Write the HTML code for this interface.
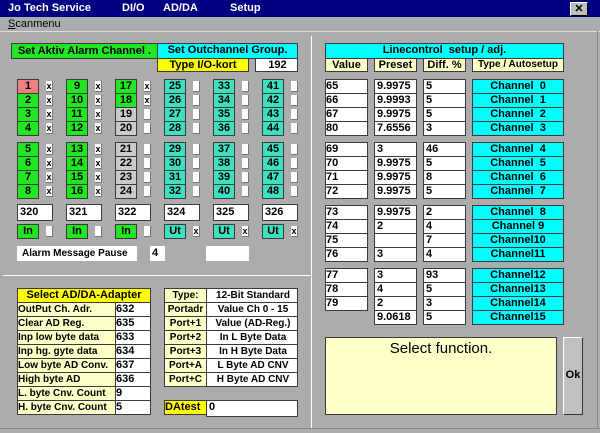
<!DOCTYPE html>
<html><head><style>
*{margin:0;padding:0;box-sizing:border-box}
body{width:600px;height:433px;background:#acacac;font:bold 11px "Liberation Sans",sans-serif;color:#000;position:relative;overflow:hidden}
div{position:absolute;white-space:nowrap;overflow:hidden}
.tb{left:0;top:0;width:600px;height:17px;background:#000080;color:#fff;font-size:11px}
.tb span{position:absolute;top:2px}
.x{left:570px;top:2px;width:18px;height:14px;background:#c0c0c0;border:1px solid;border-color:#fff #000 #000 #fff;color:#000;text-align:center;font-size:11px;line-height:12px}
.c{width:22px;height:15px;border:1px solid #3a3a3a;text-align:center;line-height:13px;font-size:11px}
.g{background:#22e622}.t{background:#3ee0c0}.y{background:#cacaca}.r{background:#f08080}
.k{width:7px;height:11px;background:#fff;border-right:1px solid #777;border-bottom:1px solid #777;font-size:9px;line-height:10px;text-align:center}
.w{background:#fff;border:1px solid #3a3a3a;height:15px;line-height:13px;padding-left:2px}
.ly{background:#ffffc8;border:1px solid #3a3a3a;height:15px;line-height:13px;font-size:10px}
.cy{background:#00ffff;border:1px solid #3a3a3a;height:15px;line-height:13px;text-align:center}
.ce{text-align:center}
.hl{background:#fff;height:1px}
.vl{background:#fff;width:1px}
.s{font-size:10px}
</style></head><body>
<div class="tb"><span style="left:8px">Jo Tech Service</span><span style="left:122px">DI/O</span><span style="left:163px">AD/DA</span><span style="left:230px">Setup</span></div>
<div class="x">✕</div>
<div style="left:8px;top:18px;font-weight:normal"><u>S</u>canmenu</div>
<div class="hl" style="left:0;top:31px;width:600px;background:#ddd"></div>
<div class="vl" style="left:311px;top:36px;height:392px"></div>
<div class="hl" style="left:3px;top:275px;width:308px"></div>
<div class="hl" style="left:0;top:428px;width:600px;background:#888"></div>
<div class="vl" style="left:597px;top:31px;height:398px;background:#888"></div>

<div style="left:11px;top:43px;width:147px;height:16px;background:#22e622;border:1px solid #3a3a3a;text-align:center;line-height:14px">Set Aktiv Alarm Channel .</div>
<div class="cy" style="left:157px;top:43px;width:141px;height:16px">Set Outchannel Group.</div>
<div style="left:157px;top:58px;width:92px;height:14px;background:#ffff00;border:1px solid #3a3a3a;text-align:center;line-height:12px">Type I/O-kort</div>
<div class="w ce" style="left:255px;top:58px;width:43px;height:14px;line-height:12px">192</div>

<div class="c r" style="left:17px;top:79px">1</div><div class="c g" style="left:17px;top:93px">2</div><div class="c g" style="left:17px;top:107px">3</div><div class="c g" style="left:17px;top:121px">4</div>
<div class="c g" style="left:17px;top:142px">5</div><div class="c g" style="left:17px;top:156px">6</div><div class="c g" style="left:17px;top:170px">7</div><div class="c g" style="left:17px;top:184px">8</div>
<div class="c g" style="left:66px;top:79px">9</div><div class="c g" style="left:66px;top:93px">10</div><div class="c g" style="left:66px;top:107px">11</div><div class="c g" style="left:66px;top:121px">12</div>
<div class="c g" style="left:66px;top:142px">13</div><div class="c g" style="left:66px;top:156px">14</div><div class="c g" style="left:66px;top:170px">15</div><div class="c g" style="left:66px;top:184px">16</div>
<div class="c g" style="left:115px;top:79px">17</div><div class="c g" style="left:115px;top:93px">18</div><div class="c y" style="left:115px;top:107px">19</div><div class="c y" style="left:115px;top:121px">20</div>
<div class="c y" style="left:115px;top:142px">21</div><div class="c y" style="left:115px;top:156px">22</div><div class="c y" style="left:115px;top:170px">23</div><div class="c y" style="left:115px;top:184px">24</div>
<div class="c t" style="left:164px;top:79px">25</div><div class="c t" style="left:164px;top:93px">26</div><div class="c t" style="left:164px;top:107px">27</div><div class="c t" style="left:164px;top:121px">28</div>
<div class="c t" style="left:164px;top:142px">29</div><div class="c t" style="left:164px;top:156px">30</div><div class="c t" style="left:164px;top:170px">31</div><div class="c t" style="left:164px;top:184px">32</div>
<div class="c t" style="left:213px;top:79px">33</div><div class="c t" style="left:213px;top:93px">34</div><div class="c t" style="left:213px;top:107px">35</div><div class="c t" style="left:213px;top:121px">36</div>
<div class="c t" style="left:213px;top:142px">37</div><div class="c t" style="left:213px;top:156px">38</div><div class="c t" style="left:213px;top:170px">39</div><div class="c t" style="left:213px;top:184px">40</div>
<div class="c t" style="left:262px;top:79px">41</div><div class="c t" style="left:262px;top:93px">42</div><div class="c t" style="left:262px;top:107px">43</div><div class="c t" style="left:262px;top:121px">44</div>
<div class="c t" style="left:262px;top:142px">45</div><div class="c t" style="left:262px;top:156px">46</div><div class="c t" style="left:262px;top:170px">47</div><div class="c t" style="left:262px;top:184px">48</div>

<div class="k" style="left:46px;top:81px">x</div><div class="k" style="left:46px;top:95px">x</div><div class="k" style="left:46px;top:109px">x</div><div class="k" style="left:46px;top:123px">x</div>
<div class="k" style="left:46px;top:144px">x</div><div class="k" style="left:46px;top:158px">x</div><div class="k" style="left:46px;top:172px">x</div><div class="k" style="left:46px;top:186px">x</div>
<div class="k" style="left:95px;top:81px">x</div><div class="k" style="left:95px;top:95px">x</div><div class="k" style="left:95px;top:109px">x</div><div class="k" style="left:95px;top:123px">x</div>
<div class="k" style="left:95px;top:144px">x</div><div class="k" style="left:95px;top:158px">x</div><div class="k" style="left:95px;top:172px">x</div><div class="k" style="left:95px;top:186px">x</div>
<div class="k" style="left:144px;top:81px">x</div><div class="k" style="left:144px;top:95px">x</div><div class="k" style="left:144px;top:109px"></div><div class="k" style="left:144px;top:123px"></div>
<div class="k" style="left:144px;top:144px"></div><div class="k" style="left:144px;top:158px"></div><div class="k" style="left:144px;top:172px"></div><div class="k" style="left:144px;top:186px"></div>
<div class="k" style="left:193px;top:81px"></div><div class="k" style="left:193px;top:95px"></div><div class="k" style="left:193px;top:109px"></div><div class="k" style="left:193px;top:123px"></div>
<div class="k" style="left:193px;top:144px"></div><div class="k" style="left:193px;top:158px"></div><div class="k" style="left:193px;top:172px"></div><div class="k" style="left:193px;top:186px"></div>
<div class="k" style="left:242px;top:81px"></div><div class="k" style="left:242px;top:95px"></div><div class="k" style="left:242px;top:109px"></div><div class="k" style="left:242px;top:123px"></div>
<div class="k" style="left:242px;top:144px"></div><div class="k" style="left:242px;top:158px"></div><div class="k" style="left:242px;top:172px"></div><div class="k" style="left:242px;top:186px"></div>
<div class="k" style="left:291px;top:81px"></div><div class="k" style="left:291px;top:95px"></div><div class="k" style="left:291px;top:109px"></div><div class="k" style="left:291px;top:123px"></div>
<div class="k" style="left:291px;top:144px"></div><div class="k" style="left:291px;top:158px"></div><div class="k" style="left:291px;top:172px"></div><div class="k" style="left:291px;top:186px"></div>

<div class="w" style="left:17px;top:204px;width:36px;height:17px;line-height:15px">320</div>
<div class="w" style="left:66px;top:204px;width:36px;height:17px;line-height:15px">321</div>
<div class="w" style="left:115px;top:204px;width:36px;height:17px;line-height:15px">322</div>
<div class="w" style="left:164px;top:204px;width:36px;height:17px;line-height:15px">324</div>
<div class="w" style="left:213px;top:204px;width:36px;height:17px;line-height:15px">325</div>
<div class="w" style="left:262px;top:204px;width:36px;height:17px;line-height:15px">326</div>

<div class="c g" style="left:17px;top:224px">In</div><div class="k" style="left:46px;top:226px"></div>
<div class="c g" style="left:66px;top:224px">In</div><div class="k" style="left:95px;top:226px"></div>
<div class="c g" style="left:115px;top:224px">In</div><div class="k" style="left:144px;top:226px"></div>
<div class="c t" style="left:164px;top:224px">Ut</div><div class="k" style="left:193px;top:226px">x</div>
<div class="c t" style="left:213px;top:224px">Ut</div><div class="k" style="left:242px;top:226px">x</div>
<div class="c t" style="left:262px;top:224px">Ut</div><div class="k" style="left:291px;top:226px">x</div>

<div class="s" style="left:17px;top:246px;width:120px;height:15px;background:#fff;line-height:15px;padding-left:5px">Alarm Message Pause</div>
<div style="left:150px;top:246px;width:15px;height:15px;background:#fff;line-height:15px;padding-left:2px">4</div>
<div style="left:206px;top:246px;width:43px;height:15px;background:#fff"></div>

<div style="left:17px;top:288px;width:134px;height:15px;background:#ffff00;border:1px solid #3a3a3a;text-align:center;line-height:13px">Select AD/DA-Adapter</div>
<div class="ly" style="left:17px;top:302px;width:99px">OutPut Ch. Adr.</div><div class="w" style="left:115px;top:302px;width:36px;padding-left:0">632</div>
<div class="ly" style="left:17px;top:316px;width:99px">Clear AD Reg.</div><div class="w" style="left:115px;top:316px;width:36px;padding-left:0">635</div>
<div class="ly" style="left:17px;top:330px;width:99px">Inp low byte data</div><div class="w" style="left:115px;top:330px;width:36px;padding-left:0">633</div>
<div class="ly" style="left:17px;top:344px;width:99px">Inp hg. gyte data</div><div class="w" style="left:115px;top:344px;width:36px;padding-left:0">634</div>
<div class="ly" style="left:17px;top:358px;width:99px">Low byte AD Conv.</div><div class="w" style="left:115px;top:358px;width:36px;padding-left:0">637</div>
<div class="ly" style="left:17px;top:372px;width:99px">High byte AD</div><div class="w" style="left:115px;top:372px;width:36px;padding-left:0">636</div>
<div class="ly" style="left:17px;top:386px;width:99px">L. byte Cnv. Count</div><div class="w" style="left:115px;top:386px;width:36px;padding-left:0">9</div>
<div class="ly" style="left:17px;top:400px;width:99px">H. byte Cnv. Count</div><div class="w" style="left:115px;top:400px;width:36px;padding-left:0">5</div>

<div class="ly ce" style="left:164px;top:288px;width:43px">Type:</div><div class="w ce s" style="left:206px;top:288px;width:92px">12-Bit Standard</div>
<div class="ly ce" style="left:164px;top:302px;width:43px">Portadr</div><div class="w ce s" style="left:206px;top:302px;width:92px">Value Ch 0 - 15</div>
<div class="ly ce" style="left:164px;top:316px;width:43px">Port+1</div><div class="w ce s" style="left:206px;top:316px;width:92px">Value (AD-Reg.)</div>
<div class="ly ce" style="left:164px;top:330px;width:43px">Port+2</div><div class="w ce s" style="left:206px;top:330px;width:92px">In L Byte Data</div>
<div class="ly ce" style="left:164px;top:344px;width:43px">Port+3</div><div class="w ce s" style="left:206px;top:344px;width:92px">In H Byte Data</div>
<div class="ly ce" style="left:164px;top:358px;width:43px">Port+A</div><div class="w ce s" style="left:206px;top:358px;width:92px">L Byte AD CNV</div>
<div class="ly ce" style="left:164px;top:372px;width:43px">Port+C</div><div class="w ce s" style="left:206px;top:372px;width:92px">H Byte AD CNV</div>
<div style="left:164px;top:400px;width:43px;height:15px;background:#ffff00;border:1px solid #3a3a3a;line-height:13px">DAtest</div><div class="w" style="left:206px;top:400px;width:92px;height:17px">0</div>

<div class="cy" style="left:325px;top:43px;width:239px;height:16px">Linecontrol&nbsp; setup / adj.</div>
<div class="ly ce" style="left:325px;top:58px;width:43px;height:14px;line-height:12px;font-size:11px">Value</div>
<div class="ly ce" style="left:374px;top:58px;width:43px;height:14px;line-height:12px;font-size:11px">Preset</div>
<div class="ly ce" style="left:423px;top:58px;width:43px;height:14px;line-height:12px;font-size:11px">Diff. %</div>
<div class="ly ce" style="left:472px;top:58px;width:92px;height:14px;line-height:12px">Type / Autosetup</div>

<div class="w" style="left:325px;top:79px;width:43px;padding-left:0">65</div><div class="w" style="left:374px;top:79px;width:43px">9.9975</div><div class="w" style="left:423px;top:79px;width:43px">5</div><div class="cy" style="left:472px;top:79px;width:92px">Channel&nbsp; 0</div>
<div class="w" style="left:325px;top:93px;width:43px;padding-left:0">66</div><div class="w" style="left:374px;top:93px;width:43px">9.9993</div><div class="w" style="left:423px;top:93px;width:43px">5</div><div class="cy" style="left:472px;top:93px;width:92px">Channel&nbsp; 1</div>
<div class="w" style="left:325px;top:107px;width:43px;padding-left:0">67</div><div class="w" style="left:374px;top:107px;width:43px">9.9975</div><div class="w" style="left:423px;top:107px;width:43px">5</div><div class="cy" style="left:472px;top:107px;width:92px">Channel&nbsp; 2</div>
<div class="w" style="left:325px;top:121px;width:43px;padding-left:0">80</div><div class="w" style="left:374px;top:121px;width:43px">7.6556</div><div class="w" style="left:423px;top:121px;width:43px">3</div><div class="cy" style="left:472px;top:121px;width:92px">Channel&nbsp; 3</div>

<div class="w" style="left:325px;top:142px;width:43px;padding-left:0">69</div><div class="w" style="left:374px;top:142px;width:43px">3</div><div class="w" style="left:423px;top:142px;width:43px">46</div><div class="cy" style="left:472px;top:142px;width:92px">Channel&nbsp; 4</div>
<div class="w" style="left:325px;top:156px;width:43px;padding-left:0">70</div><div class="w" style="left:374px;top:156px;width:43px">9.9975</div><div class="w" style="left:423px;top:156px;width:43px">5</div><div class="cy" style="left:472px;top:156px;width:92px">Channel&nbsp; 5</div>
<div class="w" style="left:325px;top:170px;width:43px;padding-left:0">71</div><div class="w" style="left:374px;top:170px;width:43px">9.9975</div><div class="w" style="left:423px;top:170px;width:43px">8</div><div class="cy" style="left:472px;top:170px;width:92px">Channel&nbsp; 6</div>
<div class="w" style="left:325px;top:184px;width:43px;padding-left:0">72</div><div class="w" style="left:374px;top:184px;width:43px">9.9975</div><div class="w" style="left:423px;top:184px;width:43px">5</div><div class="cy" style="left:472px;top:184px;width:92px">Channel&nbsp; 7</div>

<div class="w" style="left:325px;top:205px;width:43px;padding-left:0">73</div><div class="w" style="left:374px;top:205px;width:43px">9.9975</div><div class="w" style="left:423px;top:205px;width:43px">2</div><div class="cy" style="left:472px;top:205px;width:92px">Channel&nbsp; 8</div>
<div class="w" style="left:325px;top:219px;width:43px;padding-left:0">74</div><div class="w" style="left:374px;top:219px;width:43px">2</div><div class="w" style="left:423px;top:219px;width:43px">4</div><div class="cy" style="left:472px;top:219px;width:92px">Channel 9</div>
<div class="w" style="left:325px;top:233px;width:43px;padding-left:0">75</div><div class="w" style="left:374px;top:233px;width:43px"></div><div class="w" style="left:423px;top:233px;width:43px">7</div><div class="cy" style="left:472px;top:233px;width:92px">Channel10</div>
<div class="w" style="left:325px;top:247px;width:43px;padding-left:0">76</div><div class="w" style="left:374px;top:247px;width:43px">3</div><div class="w" style="left:423px;top:247px;width:43px">4</div><div class="cy" style="left:472px;top:247px;width:92px">Channel11</div>

<div class="w" style="left:325px;top:268px;width:43px;padding-left:0">77</div><div class="w" style="left:374px;top:268px;width:43px">3</div><div class="w" style="left:423px;top:268px;width:43px">93</div><div class="cy" style="left:472px;top:268px;width:92px">Channel12</div>
<div class="w" style="left:325px;top:282px;width:43px;padding-left:0">78</div><div class="w" style="left:374px;top:282px;width:43px">4</div><div class="w" style="left:423px;top:282px;width:43px">5</div><div class="cy" style="left:472px;top:282px;width:92px">Channel13</div>
<div class="w" style="left:325px;top:296px;width:43px;padding-left:0">79</div><div class="w" style="left:374px;top:296px;width:43px">2</div><div class="w" style="left:423px;top:296px;width:43px">3</div><div class="cy" style="left:472px;top:296px;width:92px">Channel14</div>
<div class="w" style="left:374px;top:310px;width:43px">9.0618</div><div class="w" style="left:423px;top:310px;width:43px">5</div><div class="cy" style="left:472px;top:310px;width:92px">Channel15</div>

<div style="left:325px;top:337px;width:232px;height:78px;background:#ffffc8;border:1px solid #3a3a3a;font-weight:normal;font-size:15px;text-align:center;padding-top:2px">Select function.</div>
<div style="left:563px;top:337px;width:20px;height:78px;background:#c0c0c0;border:1px solid;border-color:#fff #333 #333 #fff;line-height:74px;text-align:center">Ok</div>
</body></html>
